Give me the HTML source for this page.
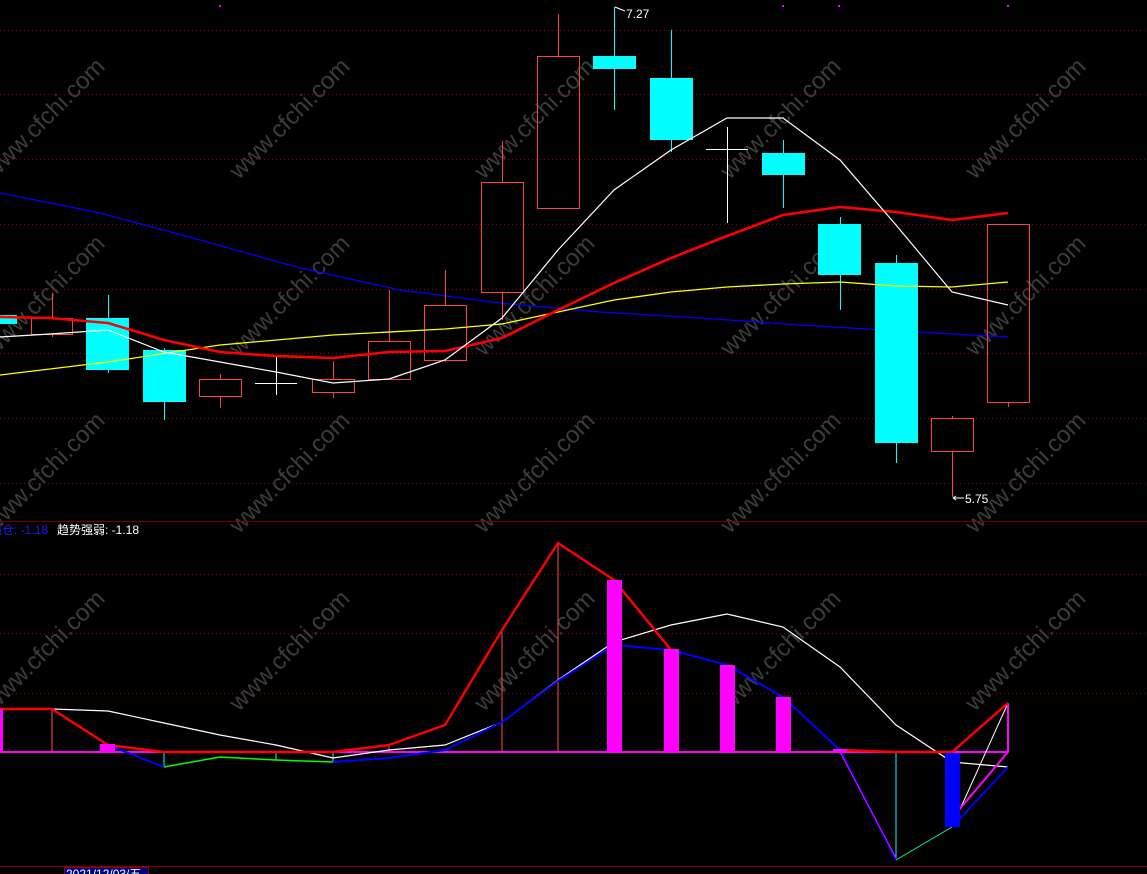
<!DOCTYPE html>
<html><head><meta charset="utf-8"><style>
html,body{margin:0;padding:0;background:#000;width:1147px;height:874px;overflow:hidden}
svg{display:block}
text{font-family:"Liberation Sans","Noto Sans CJK SC",sans-serif}
</style></head><body>
<svg width="1147" height="874" viewBox="0 0 1147 874" xmlns="http://www.w3.org/2000/svg">
<rect width="1147" height="874" fill="#000"/>
<g fill="#3c3c3c" font-size="24" text-anchor="middle">
<g id="wmrow">
<text transform="translate(50,124) rotate(-45)">www.cfchi.com</text>
<text transform="translate(295,124) rotate(-45)">www.cfchi.com</text>
<text transform="translate(540,124) rotate(-45)">www.cfchi.com</text>
<text transform="translate(786,124) rotate(-45)">www.cfchi.com</text>
<text transform="translate(1031,124) rotate(-45)">www.cfchi.com</text>
</g>
<use href="#wmrow" y="177"/>
<use href="#wmrow" y="354"/>
<use href="#wmrow" y="532"/>
</g>
<g stroke="#8b0000" stroke-width="1" stroke-dasharray="1,3">
<line x1="0" y1="30.5" x2="1147" y2="30.5"/>
<line x1="0" y1="94.5" x2="1147" y2="94.5"/>
<line x1="0" y1="159.5" x2="1147" y2="159.5"/>
<line x1="0" y1="224.5" x2="1147" y2="224.5"/>
<line x1="0" y1="289.5" x2="1147" y2="289.5"/>
<line x1="0" y1="353.5" x2="1147" y2="353.5"/>
<line x1="0" y1="418.5" x2="1147" y2="418.5"/>
<line x1="0" y1="483.5" x2="1147" y2="483.5"/>
<line x1="0" y1="574.5" x2="1147" y2="574.5"/>
<line x1="0" y1="633.5" x2="1147" y2="633.5"/>
<line x1="0" y1="693.5" x2="1147" y2="693.5"/>
</g>
<line x1="0" y1="521.5" x2="1147" y2="521.5" stroke="#7a0000"/>
<line x1="0" y1="866.5" x2="1147" y2="866.5" stroke="#8b0000"/>
<g fill="#f0f">
<rect x="219" y="5" width="2" height="2"/><rect x="782" y="5" width="2" height="2"/><rect x="838" y="5" width="2" height="2"/><rect x="1007" y="5" width="2" height="2"/>
</g>
<polyline fill="none" stroke="#0000ff" stroke-width="1.2" points="0,193 100,213 200,240 300,268 400,290 500,303 600,312 700,318 800,325 900,331 1008,337"/>
<g stroke="#ff4040" stroke-width="1" fill="none" shape-rendering="crispEdges">
<line x1="52.5" y1="293" x2="52.5" y2="318"/><line x1="52.5" y1="334" x2="52.5" y2="337"/><rect x="31.5" y="318.5" width="41" height="16"/>
<line x1="220.5" y1="374" x2="220.5" y2="379"/><line x1="220.5" y1="396" x2="220.5" y2="408"/><rect x="199.5" y="379.5" width="42" height="17"/>
<line x1="333.5" y1="361" x2="333.5" y2="379"/><line x1="333.5" y1="392" x2="333.5" y2="398"/><rect x="312.5" y="379.5" width="42" height="13"/>
<line x1="389.5" y1="290" x2="389.5" y2="341"/><rect x="368.5" y="341.5" width="42" height="38"/>
<line x1="445.5" y1="270" x2="445.5" y2="305"/><line x1="445.5" y1="360" x2="445.5" y2="362"/><rect x="424.5" y="305.5" width="42" height="55"/>
<line x1="502.5" y1="141" x2="502.5" y2="182"/><line x1="502.5" y1="292" x2="502.5" y2="320"/><rect x="481.5" y="182.5" width="42" height="110"/>
<line x1="558.5" y1="14" x2="558.5" y2="56"/><rect x="537.5" y="56.5" width="42" height="152"/>
<line x1="952.5" y1="416" x2="952.5" y2="418"/><line x1="952.5" y1="451" x2="952.5" y2="497"/><rect x="931.5" y="418.5" width="42" height="33"/>
<line x1="1008.5" y1="402" x2="1008.5" y2="407"/><rect x="987.5" y="224.5" width="42" height="178"/>
</g>
<g stroke="#00ffff" stroke-width="1" shape-rendering="crispEdges">
<line x1="108.5" y1="295" x2="108.5" y2="373"/><line x1="164.5" y1="348" x2="164.5" y2="420"/>
<line x1="614.5" y1="7" x2="614.5" y2="110"/><line x1="671.5" y1="30" x2="671.5" y2="152"/>
<line x1="783.5" y1="140" x2="783.5" y2="208"/><line x1="840.5" y1="217" x2="840.5" y2="310"/>
<line x1="896.5" y1="255" x2="896.5" y2="463"/>
</g>
<g fill="#00ffff" shape-rendering="crispEdges">
<rect x="0" y="315" width="17" height="9"/>
<rect x="86" y="318" width="43" height="52"/>
<rect x="143" y="350" width="43" height="52"/>
<rect x="593" y="56" width="43" height="13"/>
<rect x="650" y="78" width="43" height="62"/>
<rect x="762" y="153" width="43" height="22"/>
<rect x="818" y="224" width="43" height="51"/>
<rect x="875" y="263" width="43" height="180"/>
</g>
<g stroke="#fff" stroke-width="1" shape-rendering="crispEdges">
<line x1="276.5" y1="357" x2="276.5" y2="395"/><line x1="255" y1="383.5" x2="297" y2="383.5"/>
<line x1="727.5" y1="127" x2="727.5" y2="223"/><line x1="706" y1="149.5" x2="748" y2="149.5"/>
</g>
<polyline fill="none" stroke="#ffff00" stroke-width="1.3" points="0,375 108,362 220,345 333,335 445,329 502,324 558,312 614,300 671,292 727,287 783,284 840,282 896,286 952,287 1008,282"/>
<polyline fill="none" stroke="#ff0000" stroke-width="2.6" points="0,317 50,318 108,323 164,340 220,352 276,356 333,358 389,352 445,351 502,338 558,310 614,283 671,258 727,236 783,215 840,207 896,212 952,220 1008,213"/>
<polyline fill="none" stroke="#fff" stroke-width="1.2" points="0,337 50,334 108,330 164,352 220,362 276,372 333,383 389,379 445,360 502,318 558,250 614,190 671,150 727,118 783,118 840,160 896,225 952,292 1008,305"/>
<g fill="#fff" font-size="12">
<text x="626" y="18">7.27</text>
<text x="965" y="503">5.75</text>
</g>
<path d="M615,7 L620,9 L625,11" stroke="#fff" fill="none"/>
<path d="M953,498 L964,498 M953,498 l3,-2 M953,498 l3,2" stroke="#fff" fill="none"/>
<text x="-10" y="534" font-size="12" fill="#1a1aff">强仓: -1.18</text>
<text x="57" y="534" font-size="12" fill="#fff">趋势强弱: -1.18</text>
<line x1="0" y1="752" x2="1008" y2="752" stroke="#ff00ff" stroke-width="2"/>
<g stroke="#ff5050" stroke-width="1"><line x1="52" y1="709" x2="52" y2="752"/><line x1="502" y1="630" x2="502" y2="752"/><line x1="558" y1="543" x2="558" y2="752"/><line x1="1008" y1="703" x2="1008" y2="752"/><line x1="389" y1="745" x2="389" y2="752"/></g>
<g stroke="#00ffff" stroke-width="1"><line x1="164" y1="752" x2="164" y2="767"/><line x1="276" y1="752" x2="276" y2="760"/><line x1="896" y1="752" x2="896" y2="860"/><line x1="333" y1="752" x2="333" y2="762"/></g>
<polyline fill="none" stroke="#fff" stroke-width="1.2" points="0,709 52,709 108,711 164,723 220,735 276,745 333,758 389,750 445,745 502,722 558,680 614,642 671,625 727,614 783,627 840,667 896,725 952,762 1008,767"/>
<polyline fill="none" stroke="#fff" stroke-width="1" points="952,827 1008,703"/>
<polyline fill="none" stroke="#0000ff" stroke-width="2" points="0,709 52,709 108,745 164,767"/>
<polyline fill="none" stroke="#00ff00" stroke-width="1.5" points="164,767 220,757 276,760 333,762"/>
<polyline fill="none" stroke="#0000ff" stroke-width="2" points="333,762 389,758 445,750 502,722 558,681 614,645 671,650 727,665 783,697 840,750 896,860"/>
<polyline fill="none" stroke="#ff00ff" stroke-width="1" points="840,752 896,858"/>
<polyline fill="none" stroke="#00ff88" stroke-width="1" points="896,860 952,827"/>
<polyline fill="none" stroke="#0000ff" stroke-width="2" points="952,827 1008,767"/>
<polyline fill="none" stroke="#ff00ff" stroke-width="2" points="952,818 1008,752 1008,703"/>
<polyline fill="none" stroke="#ff0000" stroke-width="2.4" points="0,709 52,709 108,745 164,752 276,752 333,752 389,745 445,725 502,630 558,543 614,580 671,650"/>
<polyline fill="none" stroke="#ff0000" stroke-width="2.4" points="840,750 896,752 952,752 1008,703"/>
<g fill="#ff00ff" shape-rendering="crispEdges">
<rect x="0" y="709" width="3" height="43"/>
<rect x="100" y="744" width="15" height="8"/>
<rect x="607" y="580" width="15" height="172"/>
<rect x="664" y="649" width="15" height="103"/>
<rect x="720" y="665" width="15" height="87"/>
<rect x="776" y="697" width="15" height="55"/>
<rect x="833" y="749" width="14" height="4"/>
</g>
<rect x="945" y="753" width="15" height="74" fill="#0000ff"/>
<rect x="64.5" y="867.5" width="84" height="12" fill="#000080" stroke="#8b0000"/>
<text x="66" y="878" font-size="12" fill="#fff">2021/12/03/五</text>
</svg>
</body></html>
